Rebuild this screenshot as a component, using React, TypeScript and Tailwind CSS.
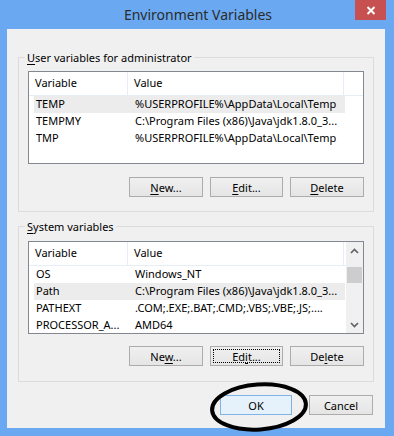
import React from "react";

type Row = { name: string; value: string; selected?: boolean };

const userVars: Row[] = [
  { name: "TEMP", value: "%USERPROFILE%\\AppData\\Local\\Temp", selected: true },
  { name: "TEMPMY", value: "C:\\Program Files (x86)\\Java\\jdk1.8.0_3..." },
  { name: "TMP", value: "%USERPROFILE%\\AppData\\Local\\Temp" },
];

const systemVars: Row[] = [
  { name: "OS", value: "Windows_NT" },
  { name: "Path", value: "C:\\Program Files (x86)\\Java\\jdk1.8.0_3...", selected: true },
  { name: "PATHEXT", value: ".COM;.EXE;.BAT;.CMD;.VBS;.VBE;.JS;...." },
  { name: "PROCESSOR_A...", value: "AMD64" },
];

function Key({ children }: { children: React.ReactNode }) {
  return <span className="underline underline-offset-2 decoration-1">{children}</span>;
}

function Btn({
  children,
  width,
  focus,
  primary,
}: {
  children: React.ReactNode;
  width: string;
  focus?: boolean;
  primary?: boolean;
}) {
  return (
    <div
      className={`${width} relative h-[20px] flex items-center justify-center border text-black ${
        primary
          ? "border-[#7eb4ea] bg-[#e5f1fb]"
          : "border-[#acacac] bg-linear-to-b from-[#f0f0f0] to-[#e5e5e5]"
      }`}
    >
      {focus && <div className="absolute inset-[2px] border border-dotted border-black" />}
      <span className="leading-none">{children}</span>
    </div>
  );
}

function ScrollBar() {
  return (
    <div className="w-[17px] flex flex-col bg-[#f0f0f0]">
      <div className="h-[17px] flex items-center justify-center">
        <svg width="9" height="6" viewBox="0 0 9 6">
          <polyline points="1,5 4.5,1.5 8,5" fill="none" stroke="#606060" strokeWidth="1.6" />
        </svg>
      </div>
      <div className="mt-[8px] mx-[1px] h-[16px] bg-[#cdcdcd]" />
      <div className="flex-1" />
      <div className="h-[17px] flex items-center justify-center">
        <svg width="9" height="6" viewBox="0 0 9 6">
          <polyline points="1,1 4.5,4.5 8,1" fill="none" stroke="#606060" strokeWidth="1.6" />
        </svg>
      </div>
    </div>
  );
}

function VarList({ rows, scroll }: { rows: Row[]; scroll?: boolean }) {
  return (
    <div className="h-[93px] flex border border-[#828790] bg-white overflow-hidden">
      <div className="flex-1 flex flex-col">
        <div className="h-[24px] flex border-b border-[#e5edf6] shrink-0">
          <div className="w-[99px] pl-[6px] flex items-center border-r border-[#e5edf6]">Variable</div>
          <div className="w-[216px] pl-[6px] flex items-center border-r border-[#e5edf6]">Value</div>
          <div className="flex-1" />
        </div>
        {rows.map((r) => (
          <div
            key={r.name}
            className={`ml-[5px] w-[311px] h-[17px] flex items-center shrink-0 ${r.selected ? "bg-[#ececec]" : ""}`}
          >
            <div className="w-[94px] pl-[2px] whitespace-nowrap overflow-hidden">{r.name}</div>
            <div className="flex-1 pl-[7px] whitespace-nowrap overflow-hidden">{r.value}</div>
          </div>
        ))}
      </div>
      {scroll && <ScrollBar />}
    </div>
  );
}

function Group({
  label,
  height,
  top,
  gap,
  children,
  buttons,
}: {
  label: React.ReactNode;
  height: string;
  top: string;
  gap: string;
  children: React.ReactNode;
  buttons: React.ReactNode;
}) {
  return (
    <div className={`relative ${height} ${top} px-[9px] border border-[#dcdcdc] flex flex-col`}>
      <div className="absolute left-[6px] top-[-9px] px-[2px] bg-[#f0f0f0] leading-[17px]">{label}</div>
      {children}
      <div className={`${gap} flex justify-end gap-[7px]`}>{buttons}</div>
    </div>
  );
}

export default function App() {
  return (
    <div className="relative w-[394px] h-[436px] bg-[#6aa9f1] font-['Noto_Sans',sans-serif] text-[11px] text-black overflow-hidden">
      {/* Title bar */}
      <div className="relative h-[29px] flex items-center justify-center">
        <span className="text-[14px] text-[#2b2b2b] pl-[2px]">Environment Variables</span>
        <div className="absolute right-[8px] top-0 w-[31px] h-[20px] bg-[#c75050] flex items-center justify-center">
          <svg width="10" height="9" viewBox="0 0 10 9">
            <path d="M1.5 1 L8.5 8 M8.5 1 L1.5 8" stroke="white" strokeWidth="2" />
          </svg>
        </div>
      </div>

      {/* Client area */}
      <div className="ml-[7px] w-[378px] h-[399px] bg-[#f0f0f0] px-[11px] pt-[28px] flex flex-col">
        <Group
          label={
            <>
              <Key>U</Key>ser variables for administrator
            </>
          }
          height="h-[155px]"
          top="pt-[13px]"
          gap="mt-[13px]"
          buttons={
            <>
              <Btn width="w-[74px]">
                <Key>N</Key>ew...
              </Btn>
              <Btn width="w-[73px]">
                <Key>E</Key>dit...
              </Btn>
              <Btn width="w-[74px]">
                <Key>D</Key>elete
              </Btn>
            </>
          }
        >
          <VarList rows={userVars} />
        </Group>

        <div className="h-[14px]" />

        <Group
          label={
            <>
              <Key>S</Key>ystem variables
            </>
          }
          height="h-[156px]"
          top="pt-[14px]"
          gap="mt-[12px]"
          buttons={
            <>
              <Btn width="w-[74px]">
                Ne<Key>w</Key>...
              </Btn>
              <Btn width="w-[73px]" focus>
                Ed<Key>i</Key>t...
              </Btn>
              <Btn width="w-[74px]">
                De<Key>l</Key>ete
              </Btn>
            </>
          }
        >
          <VarList rows={systemVars} scroll />
        </Group>

        <div className="mt-[13px] mr-[1px] flex justify-end gap-[17px]">
          <Btn width="w-[72px]" primary>
            OK
          </Btn>
          <Btn width="w-[64px]">Cancel</Btn>
        </div>
      </div>

      {/* Hand-drawn highlight around OK */}
      <svg className="absolute left-[206px] top-[378px]" width="108" height="58" viewBox="0 0 108 58">
        <ellipse cx="53" cy="29" rx="47" ry="22.5" fill="none" stroke="black" strokeWidth="4" transform="rotate(-4 53 29)" />
      </svg>
    </div>
  );
}
